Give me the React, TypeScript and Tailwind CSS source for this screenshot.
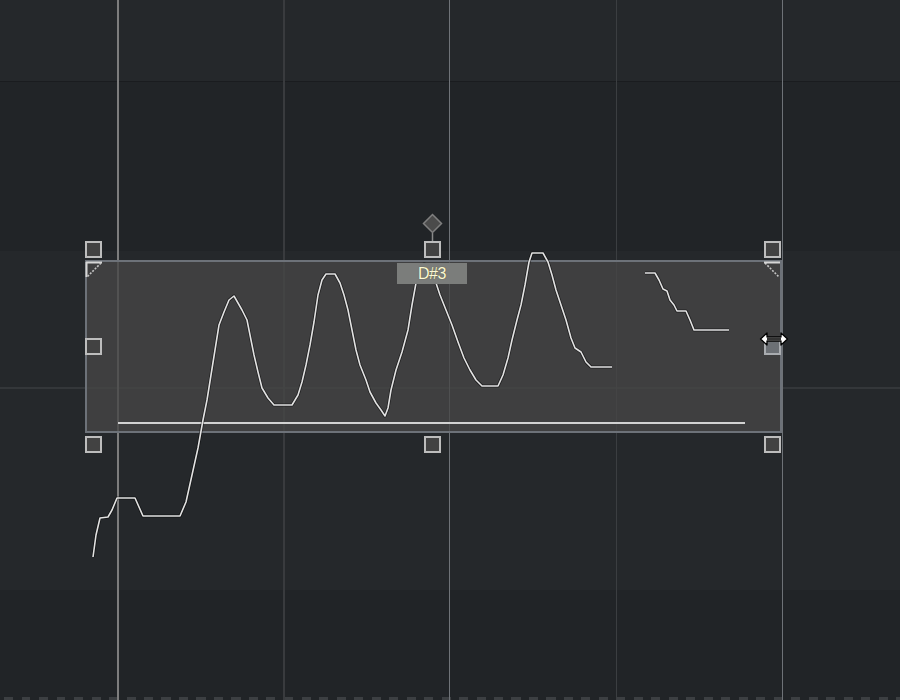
import React from 'react';

const curveA: [number, number][] = [
  [93, 557], [96, 535], [100, 518], [108, 517], [112, 510], [117, 498], [135, 498], [143, 516],
  [180, 516], [186, 502], [192, 475], [198, 448], [203, 420], [207, 400], [211, 375], [215, 350],
  [219, 325], [224, 312], [229, 300], [234, 296], [238, 303], [242, 310], [247, 320], [250, 335],
  [254, 355], [258, 372], [262, 388], [268, 398], [274, 405], [292, 405], [298, 395], [302, 382],
  [306, 365], [310, 345], [314, 322], [318, 295], [322, 280], [326, 274], [335, 274], [340, 283],
  [344, 295], [348, 310], [352, 330], [356, 350], [360, 365], [366, 380], [370, 392], [376, 403],
  [381, 410], [385, 416], [388, 408], [391, 390], [396, 370], [402, 352], [408, 330], [412, 305],
  [416, 283], [420, 268], [424, 264], [430, 266], [436, 283], [440, 295], [446, 310], [452, 325],
  [458, 342], [464, 358], [470, 370], [476, 380], [482, 386], [498, 386], [503, 375], [508, 358],
  [512, 340], [517, 320], [521, 305], [525, 285], [529, 262], [532, 253], [543, 253], [548, 262],
  [552, 275], [556, 290], [561, 305], [566, 320], [571, 338], [575, 348], [581, 352], [586, 362],
  [591, 367], [612, 367],
];

const curveB: [number, number][] = [
  [645, 273], [655, 273], [659, 280], [663, 289], [667, 291], [670, 300], [674, 305], [677, 311],
  [686, 311], [690, 320], [694, 330], [729, 330],
];

const toPoints = (pts: [number, number][]) => pts.map(([x, y]) => `${x},${y}`).join(' ');

// handle squares around the selection box
const handles = [
  { id: 'tl', cls: 'left-[85px] top-[241px]' },
  { id: 'tm', cls: 'left-[424px] top-[241px]' },
  { id: 'tr', cls: 'left-[764px] top-[241px]' },
  { id: 'ml', cls: 'left-[85px] top-[338px]' },
  { id: 'bl', cls: 'left-[85px] top-[436px]' },
  { id: 'bm', cls: 'left-[424px] top-[436px]' },
  { id: 'br', cls: 'left-[764px] top-[436px]' },
];

function Handle({ cls, hot }: { cls: string; hot?: boolean }) {
  return (
    <div
      className={`absolute h-[17px] w-[17px] border-2 ${
        hot ? 'border-[#a9acb0] bg-[#6c7075]' : 'border-[#bdbdbd] bg-[#424242]'
      } ${cls}`}
    />
  );
}

export default function App() {
  return (
    <main className="relative h-[700px] w-[900px] overflow-hidden bg-[#212427] font-['Liberation_Sans',sans-serif]">
      {/* lane rows */}
      <div className="flex h-full flex-col">
        <div className="h-[81px] bg-[#25282b]" />
        <div className="h-px bg-[#1a1c1f]" />
        <div className="h-[169px] bg-[#212427]" />
        <div className="h-[136px] bg-[#25282b]" />
        <div className="h-[2px] bg-[#34373a]" />
        <div className="h-[201px] bg-[#25282b]" />
        <div className="flex flex-1 flex-col justify-end bg-[#212427]">
          <div className="h-[3px] bg-[repeating-linear-gradient(90deg,transparent_0_4px,#3c3f42_4px_13px,transparent_13px_17.5px)]" />
        </div>
      </div>

      {/* vertical grid */}
      <div className="absolute top-0 left-[117px] h-full w-[2px] bg-[#7d7d7d]" />
      <div className="absolute top-0 left-[283px] h-full w-[2px] bg-[#393b3e]" />
      <div className="absolute top-0 left-[449px] h-full w-px bg-[#6f7378]" />
      <div className="absolute top-0 left-[616px] h-full w-px bg-[#3b3e41]" />
      <div className="absolute top-0 left-[782px] h-full w-px bg-[#6e7277]" />

      {/* selection box */}
      <div className="absolute top-[260px] left-[85px] flex h-[173px] w-[697px] flex-col justify-end border-2 border-[#6d7279] bg-[rgba(70,70,70,0.78)] pb-[7px]">
        <div className="ml-[31px] h-[2px] w-[627px] bg-[#d2d2d2]" />
      </div>

      <svg className="absolute inset-0" width={900} height={700}>
        {/* corner triangles */}
        <path d="M86 262.5 H102 M86.5 262 V277" stroke="#d6d6d6" strokeWidth={2} />
        <path d="M101 263 L87 277" stroke="#c4c4c4" strokeWidth={1.6} strokeDasharray="2 1.4" />
        <path d="M765 263 L779 277" stroke="#c4c4c4" strokeWidth={1.6} strokeDasharray="2 1.4" />
        <path d="M764 262.5 H780" stroke="#d6d6d6" strokeWidth={2} />

        {/* curves */}
        <polyline points={toPoints(curveA)} fill="none" stroke="#000" strokeOpacity={0.5} strokeWidth={3.2} strokeLinejoin="round" />
        <polyline points={toPoints(curveA)} fill="none" stroke="#e2e2e2" strokeWidth={1.6} strokeLinejoin="round" />
        <polyline points={toPoints(curveB)} fill="none" stroke="#000" strokeOpacity={0.5} strokeWidth={3.2} strokeLinejoin="round" />
        <polyline points={toPoints(curveB)} fill="none" stroke="#e2e2e2" strokeWidth={1.6} strokeLinejoin="round" />

        {/* diamond */}
        <line x1={432.5} y1={233} x2={432.5} y2={241} stroke="#8a8a8a" strokeWidth={1.5} />
        <path d="M432.5 214.5 L441.5 223.5 L432.5 232.5 L423.5 223.5 Z" fill="#4b4b4b" stroke="#7f7f7f" strokeWidth={1.5} />
      </svg>

      {handles.map((h) => (
        <Handle key={h.id} cls={h.cls} />
      ))}
      <Handle cls="left-[764px] top-[338px]" hot />

      {/* note label */}
      <div className="absolute top-[263px] left-[397px] flex h-[21px] w-[70px] items-center justify-center bg-[#7b7d7b] text-[16px] leading-none font-normal tracking-[-0.5px] text-[#fbf8d6] [text-shadow:0_0_1px_#55552a]">
        D#3
      </div>

      {/* resize cursor */}
      <svg className="absolute top-[331px] left-[759px]" width={30} height={16} viewBox="0 0 30 16">
        <path
          d="M1.5 8 L8 2 V6 H22 V2 L28.5 8 L22 14 V10 H8 V14 Z"
          fill="#fff"
          stroke="#000"
          strokeWidth={1.3}
          strokeLinejoin="round"
        />
        <path d="M8 8 H22" stroke="#000" strokeWidth={1.6} />
      </svg>
    </main>
  );
}
